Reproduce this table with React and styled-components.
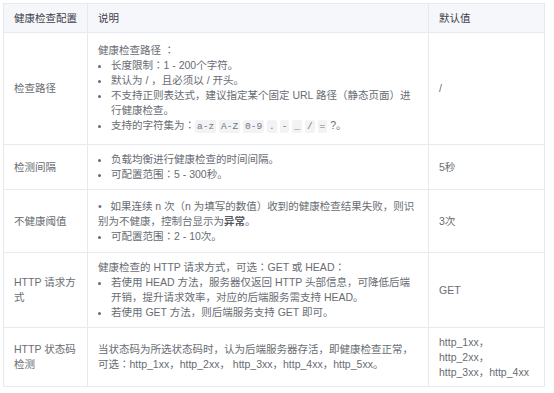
import React from "react";
import styled, { createGlobalStyle } from "styled-components";

const Global = createGlobalStyle`
  html, body { margin: 0; padding: 0; background: #ffffff; }
  body {
    font-family: "Liberation Sans", "Noto Sans CJK JP", "Noto Sans CJK SC", sans-serif;
    font-size: 10.5px;
    color: #686c72;
  }
`;

const Page = styled.div`
  padding: 3px 10px 8px 3px;
`;

const Table = styled.table`
  width: 541px;
  border-collapse: collapse;
  table-layout: fixed;
  border: 1px solid #e6e9f0;
`;

const Col = styled.col`
  width: ${(p) => p.$w}px;
`;

const HeadRow = styled.tr`
  height: 29px;
  background: #f6f7fa;
`;

const Th = styled.th`
  text-align: left;
  font-weight: normal;
  color: #3d4148;
  padding: 0 10px;
  border: 1px solid #e6e9f0;
  line-height: 15px;
`;

const Row = styled.tr`
  height: ${(p) => p.$h}px;
`;

const Td = styled.td`
  vertical-align: middle;
  padding: ${(p) => p.$pad || "7px 10px"};
  border: 1px solid #e6e9f0;
  line-height: 15px;
  word-break: break-all;
`;

const P = styled.p`
  margin: 0;
`;

const List = styled.ul`
  margin: 0;
  padding-left: 13px;
  list-style: disc;
`;

const Item = styled.li`
  margin: 0;
`;

const Code = styled.code`
  font-family: "Liberation Mono", "DejaVu Sans Mono", monospace;
  font-size: 9.5px;
  background: #f2f3f5;
  color: #73777d;
  padding: 1px 2px;
  border-radius: 2px;
`;

const Strong = styled.b`
  font-weight: bold;
  color: #555a60;
`;

export default function App() {
  return (
    <Page>
      <Global />
      <Table>
        <colgroup>
          <Col $w={84} />
          <Col $w={341} />
          <Col $w={116} />
        </colgroup>
        <thead>
          <HeadRow>
            <Th>健康检查配置</Th>
            <Th>说明</Th>
            <Th>默认值</Th>
          </HeadRow>
        </thead>
        <tbody>
          <Row $h={112}>
            <Td>检查路径</Td>
            <Td>
              <P>健康检查路径 ：</P>
              <List>
                <Item>长度限制：1 - 200个字符。</Item>
                <Item>默认为 / ，且必须以 / 开头。</Item>
                <Item>不支持正则表达式，建议指定某个固定 URL 路径（静态页面）进行健康检查。</Item>
                <Item>
                  支持的字符集为：<Code>a-z</Code> <Code>A-Z</Code> <Code>0-9</Code>{" "}
                  <Code>.</Code> <Code>-</Code> <Code>_</Code> <Code>/</Code> <Code>=</Code> ?。
                </Item>
              </List>
            </Td>
            <Td>/</Td>
          </Row>
          <Row $h={44}>
            <Td>检测间隔</Td>
            <Td>
              <List>
                <Item>负载均衡进行健康检查的时间间隔。</Item>
                <Item>可配置范围：5 - 300秒。</Item>
              </List>
            </Td>
            <Td>5秒</Td>
          </Row>
          <Row $h={63}>
            <Td>不健康阈值</Td>
            <Td>
              <P>
                •&nbsp;&nbsp; 如果连续 n 次（n 为填写的数值）收到的健康检查结果失败，则识别为不健康，控制台显示为<Strong>异常</Strong>。
              </P>
              <List>
                <Item>可配置范围：2 - 10次。</Item>
              </List>
            </Td>
            <Td>3次</Td>
          </Row>
          <Row $h={75}>
            <Td>HTTP 请求方式</Td>
            <Td>
              <P>健康检查的 HTTP 请求方式，可选：GET 或 HEAD：</P>
              <List>
                <Item>若使用 HEAD 方法，服务器仅返回 HTTP 头部信息，可降低后端开销，提升请求效率，对应的后端服务需支持 HEAD。</Item>
                <Item>若使用 GET 方法，则后端服务支持 GET 即可。</Item>
              </List>
            </Td>
            <Td>GET</Td>
          </Row>
          <Row $h={59}>
            <Td>HTTP 状态码检测</Td>
            <Td>
              <P>当状态码为所选状态码时，认为后端服务器存活，即健康检查正常，可选：http_1xx，http_2xx， http_3xx，http_4xx，http_5xx。</P>
            </Td>
            <Td $pad="5px 10px">
              http_1xx，
              <br />
              http_2xx，
              <br />
              http_3xx，http_4xx
            </Td>
          </Row>
        </tbody>
      </Table>
    </Page>
  );
}
